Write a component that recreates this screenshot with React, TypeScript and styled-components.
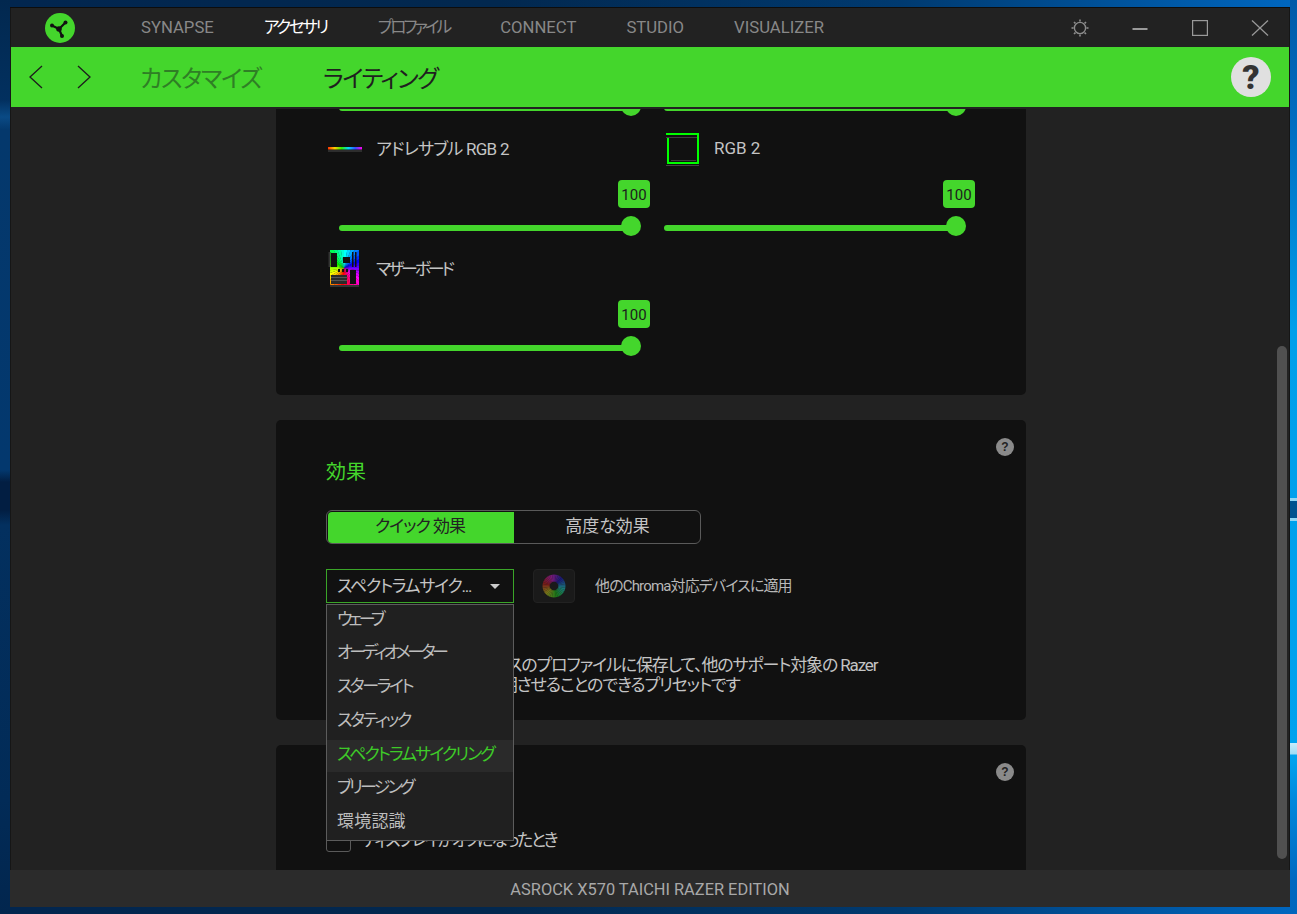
import React from "react";
import styled, { createGlobalStyle } from "styled-components";

const G = "#44d62c";

const Global = createGlobalStyle`
  html, body { margin: 0; padding: 0; height: 100%; overflow: hidden; background: #02264f; }
  * { box-sizing: border-box; }
  body { font-family: Roboto, "Noto Sans CJK JP", sans-serif; font-feature-settings: "palt" 1; }
`;

const Desktop = styled.div`
  width: 1297px;
  height: 914px;
  padding: 7px 0 0 10px;
  background:
    linear-gradient(to bottom, transparent 498px, #8fd6f5 498px, #8fd6f5 501px, #00528f 501px, #00528f 518px, #8fd6f5 518px, #8fd6f5 521px, transparent 521px, transparent 743px, #c8ecfa 743px, #9fdcf5 754px, transparent 755px) right top / 7px 100% no-repeat,
    linear-gradient(to bottom, #005aa8 0, #006cc0 120px, #009fea 330px, #00a2ee 760px, #0088dc 800px, #0068c0 880px, #0066bd 914px) right top / 7px 100% no-repeat,
    linear-gradient(to bottom, #02284f 0, #02305f 100px, #0a4a85 117px, #04386c 130px, #03386e 470px, #021e42 482px, #021e42 510px, #03305f 525px, #022b57 800px, #02264e 914px) left top / 10px 100% no-repeat,
    linear-gradient(to right, #02264f 0, #02284f 500px, #003a70 900px, #0067c0 1297px);
`;

const Win = styled.div`
  width: 1280px;
  height: 900px;
  display: flex;
  flex-direction: column;
  border-top: 1px solid #0d0d0d;
`;

const Frame = styled.div`
  flex: 1;
  min-height: 0;
  display: flex;
  flex-direction: column;
  border-left: 1px solid #161616;
  border-right: 1px solid #161616;
`;

const TitleBar = styled.header`
  height: 39px;
  flex: none;
  display: flex;
  align-items: center;
  background: #222;
  padding-left: 34px;
`;

const Tabs = styled.nav`
  display: flex;
  gap: 50px;
  margin-left: 66px;
  margin-top: 1px;
`;

const Tab = styled.span<{ $active?: boolean; $track: number }>`
  font-size: 16.7px;
  line-height: 22px;
  letter-spacing: ${(p) => p.$track}px;
  margin-right: ${(p) => (p.$track < 0 ? 1 : 0)}px;
  white-space: nowrap;
  color: ${(p) => (p.$active ? "#fff" : "#888")};
`;

const WinControls = styled.div`
  display: flex;
  margin-left: auto;
  margin-right: -1px;
`;

const WinButton = styled.div`
  width: 60px;
  height: 39px;
  display: flex;
  align-items: center;
  justify-content: center;
`;

const GreenBar = styled.div`
  height: 60px;
  flex: none;
  display: flex;
  align-items: center;
  background: ${G};
  padding-right: 18px;
`;

const NavButton = styled.div`
  width: 48px;
  height: 60px;
  display: flex;
  align-items: center;
  justify-content: center;
`;

const NavGroup = styled.div`
  display: flex;
  margin-left: 1px;
`;

const Crumb = styled.span<{ $current?: boolean }>`
  font-size: 24px;
  line-height: 32px;
  margin-top: 3px;
  white-space: nowrap;
  letter-spacing: ${(p) => (p.$current ? "-1.5px" : "-1.3px")};
  color: ${(p) => (p.$current ? "#1f1f1f" : "#2f7f25")};
  margin-left: ${(p) => (p.$current ? "62px" : "32px")};
`;

const HelpBig = styled.div`
  margin-left: auto;
  width: 40px;
  height: 40px;
  border-radius: 50%;
  background: #e0e0e0;
  color: #333;
  font: 900 34px/40px Roboto, sans-serif;
  text-align: center;
`;

const Main = styled.main`
  position: relative;
  flex: 1;
  min-height: 0;
  background: #222;
  padding-top: 2px;
  display: flex;
  flex-direction: column;
`;

const Viewport = styled.div`
  flex: 1;
  min-height: 0;
  overflow: hidden;
  padding-left: 2px;
`;

const Column = styled.div`
  width: 750px;
  margin: -105px auto 0;
  display: flex;
  flex-direction: column;
  gap: 25px;
`;

const Card = styled.section`
  position: relative;
  background: #111;
  border-radius: 5px;
  padding: 0 50px;
  color: #c4c4c4;
`;

const LightingCard = styled(Card)`
  padding-bottom: 31px;
  border-radius: 0 0 5px 5px;
`;

const DeviceGrid = styled.div`
  display: grid;
  grid-template-columns: 325px 325px;
`;

const Device = styled.div`
  height: 120px;
  display: flex;
  flex-direction: column;
`;

const DeviceLabel = styled.div<{ $indent: number }>`
  height: 48px;
  flex: none;
  display: flex;
  align-items: center;
  padding-left: ${(p) => p.$indent}px;
`;

const DeviceName = styled.span<{ $track: number }>`
  font-size: 17px;
  letter-spacing: ${(p) => p.$track}px;
  white-space: nowrap;
  color: #c4c4c4;
  margin-top: -1px;
`;

const IconSlot = styled.div`
  width: 48px;
  flex: none;
  display: flex;
  align-items: center;
`;

const SliderBox = styled.div`
  margin-left: 13px;
  width: 311px;
  display: flex;
  flex-direction: column;
`;

const Badge = styled.div`
  align-self: flex-end;
  width: 32px;
  height: 28px;
  margin-top: 8px;
  border-radius: 4px;
  background: ${G};
  color: #1c1c1c;
  font-size: 15px;
  line-height: 30px;
  text-align: center;
`;

const Track = styled.div`
  position: relative;
  width: 295px;
  height: 6px;
  margin-top: 17px;
  border-radius: 3px;
  background: ${G};
`;

const Thumb = styled.div`
  position: absolute;
  left: 282px;
  top: -9px;
  width: 20px;
  height: 20px;
  border-radius: 50%;
  background: ${G};
`;

const HelpSmall = styled.div`
  position: absolute;
  top: 18px;
  right: 12px;
  width: 18px;
  height: 18px;
  border-radius: 50%;
  background: #8a8a8a;
  color: #222;
  font: 700 12px/18px "Liberation Sans", sans-serif;
  text-align: center;
`;

const EffectsCard = styled(Card)`
  height: 300px;
  padding-top: 40px;
`;

const CardTitle = styled.h3`
  margin: 0;
  font-size: 20px;
  line-height: 24px;
  font-weight: 400;
  color: ${G};
`;

const Toggle = styled.div`
  display: flex;
  width: 375px;
  height: 34px;
  margin-top: 26px;
  padding: 1px;
  border: 1px solid #5a5a5a;
  border-radius: 6px;
`;

const Seg = styled.div<{ $on?: boolean }>`
  flex: ${(p) => (p.$on ? "0 0 186px" : "1")};
  height: 31px;
  padding: ${(p) => (p.$on ? "0 2px 0 0" : "0 0 0 2px")};
  font-size: 17px;
  line-height: 28px;
  text-align: center;
  border-radius: 4px 0 0 4px;
  letter-spacing: ${(p) => (p.$on ? "-1px" : "0")};
  background: ${(p) => (p.$on ? G : "transparent")};
  color: ${(p) => (p.$on ? "#222" : "#c4c4c4")};
`;

const SelectRow = styled.div`
  display: flex;
  align-items: center;
  margin-top: 25px;
  height: 34px;
`;

const SelectWrap = styled.div`
  position: relative;
  width: 188px;
  height: 34px;
`;

const SelectBox = styled.div`
  height: 34px;
  display: flex;
  align-items: center;
  justify-content: space-between;
  padding: 0 13px 0 10px;
  border: 1px solid #3aa528;
  color: #c4c4c4;
`;

const SelectText = styled.span`
  font-size: 17px;
  letter-spacing: -1.25px;
  white-space: nowrap;
  margin-top: -4px;
`;

const Caret = styled.span`
  width: 0;
  height: 0;
  border-left: 5px solid transparent;
  border-right: 5px solid transparent;
  border-top: 5px solid #ccc;
`;

const Menu = styled.ul`
  position: absolute;
  z-index: 10;
  top: 35px;
  left: 0;
  width: 188px;
  margin: 0;
  padding: 0;
  list-style: none;
  display: flex;
  flex-direction: column;
  gap: 1.8px;
  background: #202020;
  border: 1px solid #5c5c5c;
`;

const MenuItem = styled.li<{ $on?: boolean; $track: number }>`
  height: 32px;
  padding: 0 0 8px 10px;
  display: flex;
  align-items: center;
  font-size: 17px;
  letter-spacing: ${(p) => p.$track}px;
  white-space: nowrap;
  background: ${(p) => (p.$on ? "#2a2a2a" : "transparent")};
  color: ${(p) => (p.$on ? "#3ecb28" : "#bdbdbd")};
`;

const ChromaButton = styled.div`
  width: 42px;
  height: 34px;
  margin-left: 19px;
  display: flex;
  align-items: center;
  justify-content: center;
  border-radius: 4px;
  background: #1a1a1a;
  border: 1px solid #222;
`;

const ApplyText = styled.span`
  margin-left: 20px;
  margin-top: -4px;
  font-size: 15px;
  letter-spacing: -0.85px;
  white-space: nowrap;
  color: #b8b8b8;
`;

const Desc = styled.p`
  margin: 52px 0 0;
  font-size: 17px;
  letter-spacing: -1.14px;
  line-height: 20px;
  color: #c4c4c4;
  white-space: nowrap;
`;

const SleepCard = styled(Card)`
  height: 200px;
  padding-top: 39px;
`;

const CheckRow = styled.label`
  display: flex;
  align-items: center;
  gap: 11px;
  margin-top: 19px;
`;

const CheckText = styled.span`
  font-size: 17px;
  letter-spacing: -2.24px;
  white-space: nowrap;
  color: #c4c4c4;
  margin-top: -3px;
`;

const CheckBox = styled.span`
  width: 25px;
  height: 25px;
  flex: none;
  border: 1px solid #5a5a5a;
  border-radius: 3px;
`;

const ScrollThumb = styled.div`
  position: absolute;
  right: 2px;
  top: 239px;
  width: 10px;
  height: 513px;
  border-radius: 5px;
  background: #505050;
`;

const StatusBar = styled.footer`
  height: 37px;
  flex: none;
  background: #2b2b2b;
  color: #a8a8a8;
  font-size: 16.4px;
  line-height: 39px;
  text-align: center;
`;

const wedges = (cx: number, cy: number, r: number, color: (deg: number) => string) =>
  Array.from({ length: 36 }, (_, i) => {
    const a0 = ((i * 10 - 90) * Math.PI) / 180;
    const a1 = (((i + 1) * 10 + 0.5 - 90) * Math.PI) / 180;
    return (
      <path
        key={i}
        d={`M${cx} ${cy}L${cx + r * Math.cos(a0)} ${cy + r * Math.sin(a0)}L${cx + r * Math.cos(a1)} ${cy + r * Math.sin(a1)}Z`}
        fill={color(i * 10)}
      />
    );
  });

const Logo = () => (
  <svg width="30" height="30" viewBox="0 0 30 30">
    <circle cx="15" cy="15" r="15" fill={G} />
    <g stroke="#111" strokeWidth="2.2" strokeLinecap="round">
      <line x1="14" y1="16" x2="7" y2="12.5" />
      <line x1="14" y1="16" x2="20.5" y2="9.5" />
      <line x1="14" y1="16" x2="17" y2="23" />
    </g>
    <circle cx="14" cy="16" r="2.8" fill="#111" />
    <circle cx="7" cy="12.5" r="2" fill="#111" />
    <circle cx="20.5" cy="9.5" r="2" fill="#111" />
    <circle cx="17" cy="23" r="2" fill="#111" />
  </svg>
);

const Sun = () => (
  <svg width="18" height="18" viewBox="0 0 18 18" fill="none" stroke="#8c8c8c">
    <circle cx="9" cy="9" r="5.6" strokeWidth="1.4" />
    <g strokeWidth="1.6">
      <line x1="9" y1="0.5" x2="9" y2="2.6" />
      <line x1="9" y1="15.4" x2="9" y2="17.5" />
      <line x1="0.5" y1="9" x2="2.6" y2="9" />
      <line x1="15.4" y1="9" x2="17.5" y2="9" />
      <line x1="3" y1="3" x2="4.4" y2="4.4" />
      <line x1="13.6" y1="13.6" x2="15" y2="15" />
      <line x1="3" y1="15" x2="4.4" y2="13.6" />
      <line x1="13.6" y1="4.4" x2="15" y2="3" />
    </g>
  </svg>
);

const Minimize = () => (
  <svg width="16" height="16" viewBox="0 0 16 16">
    <rect x="0.5" y="8" width="15" height="2" fill="#9a9a9a" />
  </svg>
);

const Maximize = () => (
  <svg width="16" height="16" viewBox="0 0 16 16" fill="none" stroke="#9a9a9a" strokeWidth="1.2">
    <rect x="0.6" y="0.6" width="14.8" height="14.8" />
  </svg>
);

const CloseIcon = () => (
  <svg width="18" height="18" viewBox="0 0 18 18" stroke="#9a9a9a" strokeWidth="1.2">
    <line x1="1" y1="1.5" x2="17" y2="16.5" />
    <line x1="17" y1="1.5" x2="1" y2="16.5" />
  </svg>
);

const Chevron = ({ flip }: { flip?: boolean }) => (
  <svg width="14" height="24" viewBox="0 0 14 24" fill="none" stroke="#1c1c1c" strokeWidth="1.3">
    <polyline points={flip ? "1,1 13,12 1,23" : "13,1 1,12 13,23"} />
  </svg>
);

const StripIcon = () => (
  <svg width="34" height="10" viewBox="0 0 34 10">
    <defs>
      <linearGradient id="strip" x1="0" x2="1" y1="0" y2="0">
        <stop offset="0" stopColor="#ff3000" />
        <stop offset="0.2" stopColor="#ffd000" />
        <stop offset="0.4" stopColor="#30f000" />
        <stop offset="0.6" stopColor="#00d8ff" />
        <stop offset="0.8" stopColor="#3050ff" />
        <stop offset="1" stopColor="#ff00f0" />
      </linearGradient>
    </defs>
    <rect y="4" width="34" height="2.5" fill="url(#strip)" />
    <rect y="7.5" width="34" height="1" fill="#4a4a4a" />
  </svg>
);

const SquareIcon = () => (
  <svg width="33" height="36" viewBox="0 0 33 36" fill="none">
    <rect x="0" y="7" width="31" height="1" fill="#3e3e3e" />
    <rect x="5" y="30" width="25" height="1" fill="#3e3e3e" />
    <rect x="0" y="35" width="33" height="1" fill="#444" />
    <path d="M0 4H32V33H2V8" stroke="#00ff00" strokeWidth="2" />
  </svg>
);

const boardHue = (deg: number) => `hsl(${(180 + deg) % 360}, 100%, 50%)`;

const BoardIcon = () => (
  <svg width="32" height="38" viewBox="0 0 32 38">
    <clipPath id="bd">
      <rect x="2" y="1" width="29" height="37" />
    </clipPath>
    <g clipPath="url(#bd)">{wedges(16, 19, 30, boardHue)}</g>
    <rect x="0.5" y="3" width="2" height="15" fill="#333" />
    <rect x="3" y="4" width="6" height="14" fill="#111" />
    <rect x="15" y="8" width="7" height="6" fill="#111" />
    <rect x="24" y="3" width="1.5" height="15" fill="#111" />
    <rect x="27" y="3" width="1.5" height="15" fill="#111" />
    <rect x="10" y="20" width="2" height="3" fill="#111" />
    <rect x="14" y="20" width="2" height="3" fill="#111" />
    <rect x="18" y="20" width="2" height="3" fill="#111" />
    <rect x="3" y="26" width="16" height="9" fill="#2a2a2a" />
    <g fill="#555">
      <rect x="3" y="28" width="16" height="1" />
      <rect x="3" y="31" width="16" height="1" />
    </g>
    <rect x="22" y="21" width="6" height="14" fill="#111" />
    <rect x="2" y="36" width="29" height="2" fill="#333" />
  </svg>
);

const WheelIcon = () => (
  <svg width="24" height="24" viewBox="0 0 24 24">
    <g>{wedges(12, 12, 11.5, (d) => `hsl(${(280 - d + 720) % 360}, 65%, 28%)`)}</g>
    <circle cx="12" cy="12" r="4.3" fill="#1a1a1a" />
  </svg>
);

const Slider = () => (
  <SliderBox>
    <Badge>100</Badge>
    <Track>
      <Thumb />
    </Track>
  </SliderBox>
);

const devices: { name: string; track: number; icon: React.ReactNode }[] = [
  { name: "アドレサブル RGB 1", track: -0.75, icon: <StripIcon /> },
  { name: "RGB 1", track: 0, icon: <SquareIcon /> },
  { name: "アドレサブル RGB 2", track: -0.75, icon: <StripIcon /> },
  { name: "RGB 2", track: 0, icon: <SquareIcon /> },
  { name: "マザーボード", track: -3.2, icon: <BoardIcon /> },
];

const effects: { name: string; track: number }[] = [
  { name: "ウェーブ", track: -3.7 },
  { name: "オーディオメーター", track: -3.4 },
  { name: "スターライト", track: -2.4 },
  { name: "スタティック", track: -2.2 },
  { name: "スペクトラムサイクリング", track: -1.95 },
  { name: "ブリージング", track: -2.8 },
  { name: "環境認識", track: 0.2 },
];

const tabs: { name: string; track: number }[] = [
  { name: "SYNAPSE", track: 0 },
  { name: "アクセサリ", track: -2.4 },
  { name: "プロファイル", track: -3 },
  { name: "CONNECT", track: 0 },
  { name: "STUDIO", track: 0 },
  { name: "VISUALIZER", track: 0 },
];

export default function App() {
  return (
    <>
      <Global />
      <Desktop>
        <Win>
          <Frame>
            <TitleBar>
              <Logo />
              <Tabs>
                {tabs.map((t) => (
                  <Tab key={t.name} $track={t.track} $active={t.name === "アクセサリ"}>
                    {t.name}
                  </Tab>
                ))}
              </Tabs>
              <WinControls>
                <WinButton><Sun /></WinButton>
                <WinButton><Minimize /></WinButton>
                <WinButton><Maximize /></WinButton>
                <WinButton><CloseIcon /></WinButton>
              </WinControls>
            </TitleBar>
            <GreenBar>
              <NavGroup>
                <NavButton><Chevron /></NavButton>
                <NavButton><Chevron flip /></NavButton>
              </NavGroup>
              <Crumb>カスタマイズ</Crumb>
              <Crumb $current>ライティング</Crumb>
              <HelpBig>?</HelpBig>
            </GreenBar>
            <Main>
              <Viewport>
                <Column>
                  <LightingCard>
                    <DeviceGrid>
                      {devices.map((d, i) => (
                        <Device key={d.name}>
                          <DeviceLabel $indent={i % 2 ? 15 : 2}>
                            <IconSlot>{d.icon}</IconSlot>
                            <DeviceName $track={d.track}>{d.name}</DeviceName>
                          </DeviceLabel>
                          <Slider />
                        </Device>
                      ))}
                    </DeviceGrid>
                  </LightingCard>
                  <EffectsCard>
                    <HelpSmall>?</HelpSmall>
                    <CardTitle>効果</CardTitle>
                    <Toggle>
                      <Seg $on>クイック 効果</Seg>
                      <Seg>高度な効果</Seg>
                    </Toggle>
                    <SelectRow>
                      <SelectWrap>
                        <SelectBox>
                          <SelectText>スペクトラムサイク...</SelectText>
                          <Caret />
                        </SelectBox>
                        <Menu>
                          {effects.map((e) => (
                            <MenuItem key={e.name} $track={e.track} $on={e.name === "スペクトラムサイクリング"}>
                              {e.name}
                            </MenuItem>
                          ))}
                        </Menu>
                      </SelectWrap>
                      <ChromaButton><WheelIcon /></ChromaButton>
                      <ApplyText>他のChroma対応デバイスに適用</ApplyText>
                    </SelectRow>
                    <Desc>
                      クイック効果は、このデバイスのプロファイルに保存して、他のサポート対象の Razer
                      <br />
                      Chroma 対応デバイスと同期させることのできるプリセットです
                    </Desc>
                  </EffectsCard>
                  <SleepCard>
                    <HelpSmall>?</HelpSmall>
                    <CardTitle>スリープ</CardTitle>
                    <CheckRow>
                      <CheckBox />
                      <CheckText>ディスプレイがオフになったとき</CheckText>
                    </CheckRow>
                  </SleepCard>
                </Column>
              </Viewport>
              <ScrollThumb />
            </Main>
          </Frame>
          <StatusBar>ASROCK X570 TAICHI RAZER EDITION</StatusBar>
        </Win>
      </Desktop>
    </>
  );
}
